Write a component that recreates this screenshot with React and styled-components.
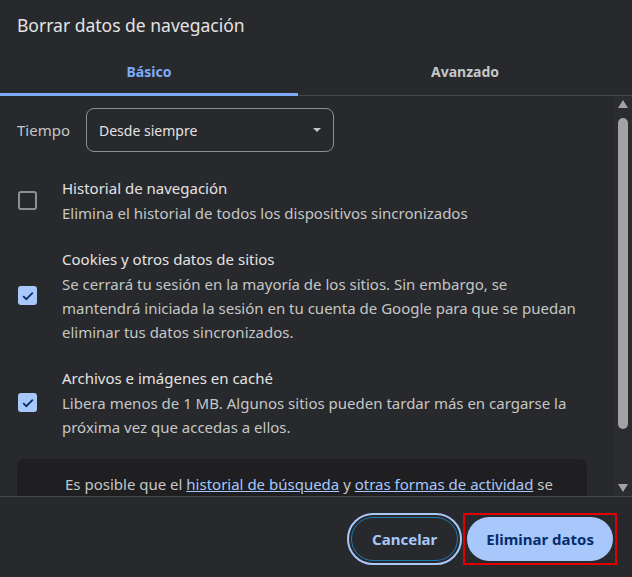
import React from "react";
import styled, { createGlobalStyle } from "styled-components";

const Global = createGlobalStyle`
  html, body { margin: 0; padding: 0; background: #28292d; }
  body { font-family: "Noto Sans", "Open Sans", sans-serif; color: #e3e3e3; }
  * { box-sizing: border-box; }
`;

const Dialog = styled.div`
  width: 632px;
  height: 577px;
  display: flex;
  flex-direction: column;
  background: #28292d;
  overflow: hidden;
`;

const Title = styled.h1`
  margin: 0;
  padding: 13px 17px 0;
  height: 50px;
  font-size: 17.5px;
  font-weight: 400;
  line-height: 24px;
  color: #e3e3e3;
`;

const Tabs = styled.div`
  display: grid;
  grid-template-columns: 298px 1fr;
  height: 46px;
  border-bottom: 1px solid #47484b;
`;

const Tab = styled.div`
  position: relative;
  display: flex;
  align-items: center;
  justify-content: center;
  padding-bottom: 2px;
  font-size: 14px;
  font-weight: 700;
  color: ${(p) => (p.$active ? "#7cacf8" : "#c4c7c5")};
  &::after {
    content: "";
    display: ${(p) => (p.$active ? "block" : "none")};
    position: absolute;
    left: 0;
    right: 0;
    bottom: -1px;
    height: 3px;
    background: #7cacf8;
  }
`;

const Body = styled.div`
  flex: 1;
  display: flex;
  min-height: 0;
`;

const Content = styled.div`
  flex: 1;
  overflow: hidden;
  padding: 12px 26px 0 17px;
  display: flex;
  flex-direction: column;
`;

const TimeRow = styled.div`
  display: flex;
  align-items: center;
  gap: 16px;
  height: 44px;
`;

const Label = styled.span`
  font-size: 15px;
  color: #c4c7c5;
`;

const Select = styled.div`
  width: 248px;
  height: 44px;
  border: 1px solid #8e918f;
  border-radius: 8px;
  display: flex;
  align-items: center;
  justify-content: space-between;
  padding: 0 12px;
  font-size: 14px;
  color: #e3e3e3;
`;

const Caret = styled.span`
  width: 0;
  height: 0;
  border-left: 4px solid transparent;
  border-right: 4px solid transparent;
  border-top: 4px solid #c4c7c5;
`;

const Items = styled.div`
  display: flex;
  flex-direction: column;
  gap: 22px;
  margin-top: 24px;
`;

const Item = styled.div`
  display: flex;
  align-items: center;
  gap: 25px;
`;

const Check = styled.span`
  flex: none;
  width: 19px;
  height: 19px;
  margin-left: 1px;
  border-radius: 3px;
  border: ${(p) => (p.$checked ? "none" : "2px solid #8e918f")};
  background: ${(p) => (p.$checked ? "#a8c7fa" : "transparent")};
  display: flex;
  align-items: center;
  justify-content: center;
`;

const ItemText = styled.div`
  display: flex;
  flex-direction: column;
`;

const ItemTitle = styled.div`
  font-size: 15px;
  line-height: 24px;
  color: #e3e3e3;
  white-space: nowrap;
`;

const ItemDesc = styled.div`
  margin-top: 1px;
  font-size: 15px;
  line-height: 24px;
  color: #c4c7c5;
  white-space: nowrap;
`;

const Info = styled.div`
  margin-top: 20px;
  background: #1f1f21;
  border-radius: 8px;
  padding: 14px 20px 20px 48px;
  font-size: 15px;
  line-height: 22px;
  color: #c4c7c5;
  white-space: nowrap;
`;

const Link = styled.a`
  color: #a8c7fa;
  text-decoration: underline;
`;

const ScrollTrack = styled.div`
  width: 19px;
  background: #2b2c2f;
  display: flex;
  flex-direction: column;
  align-items: center;
  padding: 4px 0;
`;

const Arrow = styled.span`
  width: 0;
  height: 0;
  border-left: 5px solid transparent;
  border-right: 5px solid transparent;
  ${(p) =>
    p.$down
      ? "border-top: 8px solid #a3a3a3;"
      : "border-bottom: 8px solid #a3a3a3;"}
`;

const Thumb = styled.div`
  width: 10px;
  height: 311px;
  margin-top: 10px;
  border-radius: 5px;
  background: #a3a3a3;
`;

const Spacer = styled.div`
  flex: 1;
`;

const Footer = styled.div`
  height: 81px;
  border-top: 1px solid #47484b;
  display: flex;
  justify-content: flex-end;
  align-items: flex-start;
  gap: 5px;
  padding: 16px 15px 0 0;
`;

const Button = styled.button`
  height: 44px;
  border-radius: 22px;
  font-family: inherit;
  font-size: 15px;
  font-weight: 700;
  cursor: pointer;
  padding: 0 ${(p) => (p.$primary ? "19px" : "20px")};
  border: ${(p) => (p.$primary ? "none" : "1px solid #1c7ab5")};
  background: ${(p) => (p.$primary ? "#a8c7fa" : "transparent")};
  color: ${(p) => (p.$primary ? "#062e6f" : "#a8c7fa")};
  ${(p) => (p.$focused ? "outline: 2px solid #a8c7fa; outline-offset: 2px;" : "")}
`;

const Highlight = styled.span`
  display: inline-flex;
  border: 2px solid #e00000;
  padding: 2px;
`;

const CancelWrap = styled.span`
  display: inline-flex;
  padding: 4px 0;
`;

function CheckMark() {
  return (
    <svg width="12" height="10" viewBox="0 0 12 10">
      <path d="M1.2 5.2 L4.3 8.2 L10.8 1.6" fill="none" stroke="#062e6f" strokeWidth="1.8" />
    </svg>
  );
}

export default function App() {
  return (
    <>
      <Global />
      <Dialog>
        <Title>Borrar datos de navegación</Title>
        <Tabs>
          <Tab $active>Básico</Tab>
          <Tab>Avanzado</Tab>
        </Tabs>
        <Body>
          <Content>
            <TimeRow>
              <Label>Tiempo</Label>
              <Select>
                <span>Desde siempre</span>
                <Caret />
              </Select>
            </TimeRow>
            <Items>
              <Item>
                <Check />
                <ItemText>
                  <ItemTitle>Historial de navegación</ItemTitle>
                  <ItemDesc>Elimina el historial de todos los dispositivos sincronizados</ItemDesc>
                </ItemText>
              </Item>
              <Item>
                <Check $checked>
                  <CheckMark />
                </Check>
                <ItemText>
                  <ItemTitle>Cookies y otros datos de sitios</ItemTitle>
                  <ItemDesc>
                    Se cerrará tu sesión en la mayoría de los sitios. Sin embargo, se
                    <br />
                    mantendrá iniciada la sesión en tu cuenta de Google para que se puedan
                    <br />
                    eliminar tus datos sincronizados.
                  </ItemDesc>
                </ItemText>
              </Item>
              <Item>
                <Check $checked>
                  <CheckMark />
                </Check>
                <ItemText>
                  <ItemTitle>Archivos e imágenes en caché</ItemTitle>
                  <ItemDesc>
                    Libera menos de 1 MB. Algunos sitios pueden tardar más en cargarse la
                    <br />
                    próxima vez que accedas a ellos.
                  </ItemDesc>
                </ItemText>
              </Item>
            </Items>
            <Info>
              Es posible que el <Link>historial de búsqueda</Link> y{" "}
              <Link>otras formas de actividad</Link> se
            </Info>
          </Content>
          <ScrollTrack>
            <Arrow />
            <Thumb />
            <Spacer />
            <Arrow $down />
          </ScrollTrack>
        </Body>
        <Footer>
          <CancelWrap>
            <Button $focused>Cancelar</Button>
          </CancelWrap>
          <Highlight>
            <Button $primary>Eliminar datos</Button>
          </Highlight>
        </Footer>
      </Dialog>
    </>
  );
}
